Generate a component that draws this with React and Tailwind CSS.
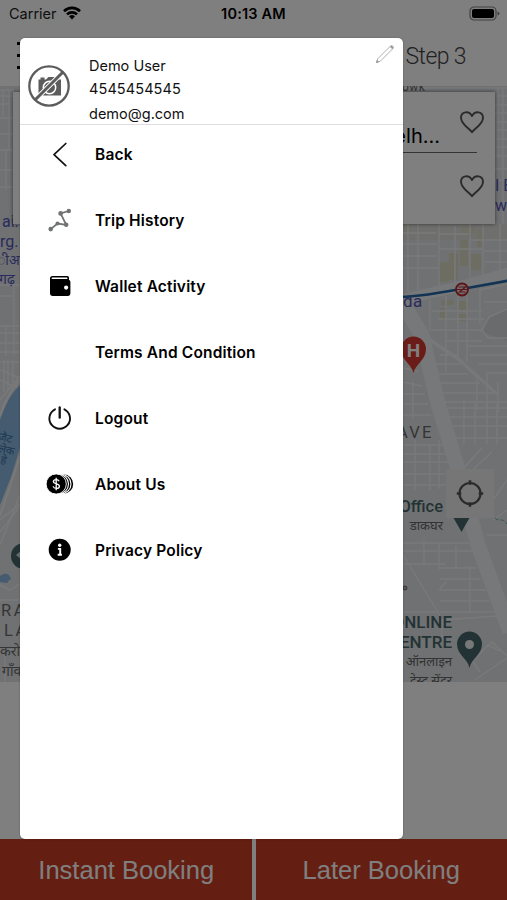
import React from "react";

const BackIcon = () => (
  <svg viewBox="0 0 28 28" className="w-7 h-7" fill="none" stroke="#111" strokeWidth="1.7" strokeLinecap="round" strokeLinejoin="round">
    <path d="M19.8 2.5 8 13.7l11.8 11" />
  </svg>
);

const TripIcon = () => (
  <svg viewBox="0 0 28 28" className="w-7 h-7" fill="#6f7371" stroke="#6f7371">
    <path d="M4.7 22.1 11.6 16.500l8.600 1.300L14.600 6.400l8.200-2.400" fill="none" strokeWidth="1.8" />
    <g stroke="none">
      <circle cx="4.7" cy="22.1" r="2.300" />
      <circle cx="11.500" cy="16.500" r="2" />
      <circle cx="20.2" cy="17.8" r="2.200" />
      <circle cx="14.600" cy="6.400" r="2.300" />
      <circle cx="22.8" cy="4" r="2.200" />
    </g>
  </svg>
);

const WalletIcon = () => (
  <svg viewBox="0 0 28 28" className="w-7 h-7">
    <path d="M6.500 3h14.800a1.800 1.800 0 0 1 1.700 1.800v2h-.2a2.200 2.200 0 0 1 1.600 2.100v11.700a2.300 2.300 0 0 1-2.300 2.300H6.300A2.300 2.300 0 0 1 4 20.600V5.500A2.500 2.500 0 0 1 6.500 3z" fill="#000" />
    <path d="M6.300 5.300h14.500" stroke="#fff" strokeWidth="1.500" strokeLinecap="round" />
    <circle cx="20.1" cy="14.600" r="2.100" fill="#fff" />
  </svg>
);

const PowerIcon = () => (
  <svg viewBox="0 0 28 28" className="w-7 h-7" fill="none" stroke="#111" strokeWidth="1.900" strokeLinecap="round">
    <path d="M9 4.300a10.300 10.300 0 1 0 9.400 0" />
    <path d="M13.700 2.500v10.200" strokeWidth="2.300" />
  </svg>
);

const CoinsIcon = () => (
  <svg viewBox="0 0 28 28" className="w-7 h-7" fill="#000">
    <circle cx="17.500" cy="13" r="9.700" />
    <circle cx="15.300" cy="13" r="9.700" stroke="#fff" strokeWidth="1.100" />
    <circle cx="12.800" cy="13" r="9.700" stroke="#fff" strokeWidth="1.100" />
    <circle cx="10.200" cy="13" r="10.100" stroke="#fff" strokeWidth=".9" />
    <path d="M13.100 10.200c-.5-1.200-1.600-1.600-2.900-1.600-1.700 0-2.800.8-2.800 2 0 3 6 1.500 6 4.600 0 1.300-1.200 2.200-3.100 2.200-1.600 0-2.800-.7-3.200-2M10.200 6.800v12.400" fill="none" stroke="#fff" strokeWidth="1.300" />
  </svg>
);

const InfoIcon = () => (
  <svg viewBox="0 0 28 28" className="w-7 h-7">
    <circle cx="13.700" cy="12.800" r="11" fill="#000" />
    <circle cx="13.700" cy="8.300" r="1.700" fill="#fff" />
    <path d="M11.900 11.900h2.300v5.800m-2.500 0h4.200" fill="none" stroke="#fff" strokeWidth="1.900" />
  </svg>
);

const MENU = [
  { label: "Back", icon: BackIcon },
  { label: "Trip History", icon: TripIcon },
  { label: "Wallet Activity", icon: WalletIcon },
  { label: "Terms And Condition", icon: null },
  { label: "Logout", icon: PowerIcon },
  { label: "About Us", icon: CoinsIcon },
  { label: "Privacy Policy", icon: InfoIcon },
];

const StatusBar = () => (
  <div className="h-7 px-[9px] grid grid-cols-3 items-center text-black text-[14.500px]">
    <div className="flex items-center gap-[6px]">
      <span className="text-[#222]">Carrier</span>
      <svg viewBox="0 0 18 14" className="w-[18px] h-[14px] -mt-[2px]" fill="none" stroke="#000" strokeWidth="2.700">
        <path d="M1 5.200a11.500 11.500 0 0 1 16 0M4 8.400a7.200 7.200 0 0 1 10 0" />
        <path d="m9 13.500 2.900-3a4.100 4.100 0 0 0-5.800 0z" fill="#000" stroke="none" />
      </svg>
    </div>
    <span className="text-center font-semibold tracking-[0.2px]">10:13 AM</span>
    <svg viewBox="0 0 31 15" className="w-[31px] h-[15px] justify-self-end -mr-[2px] -mt-[2px]">
      <rect x="1" y="1" width="26" height="13" rx="4" fill="none" stroke="#848484" strokeWidth="1.200" />
      <rect x="3" y="3" width="22" height="9" rx="2" fill="#000" />
      <path d="M28.500 5.500v4q2-.6 2-2t-2-2z" fill="#848484" />
    </svg>
  </div>
);

const MINOR_ROADS = [
  // east side, above the metro line
  "M408 224v68M418 224v66M439 224v62M455 226v56M470 224v60M483 224v54M500 224v50",
  "M403 233h33M403 244h34M403 256h34M403 268h36M439 234h30M439 249h44M470 240h37M484 251h23M484 262h23",
  // south of the metro line
  "M430 300v30M446 296v76M458 296v60M467 292v70M480 288v36M432 311h50M438 319h46M430 330h52M446 341h36",
  "M507 309l-18 8-7 13 6 8h19M480 290l27-6M484 302h23M467 346h40M470 355h37M479 364h28M488 373h19",
  "M403 350h18M440 355h18M436 364h24M436 374h32M440 383h40M442 393h52M444 402h63M477 374v36M487 372v36M498 382v30",
  "M403 368l15 3M403 382l19 4M403 394h22M403 404h25M403 415h28M413 382v36",
  // around the locate button
  "M443 408h64M448 417h59M450 426h57M455 438h52M464 400v44M475 402v42M487 402v42M497 404v40",
  "M403 445h44M403 454h46M403 462h45M403 474h42M403 485h43M403 543h66M415 440v50M430 445v45M439 440v49",
  "M462 470l20-22M468 474l24-22M493 500l14-20M493 520l14-10M487 535h20",
  // south east
  "M403 551h69M403 564h42M440 568h36M440 579h40M440 590h46M440 601h50M440 612h56M403 555l38 62M439 543v28M424 540v26",
  "M456 545v22M470 566v46M439 590l7-8M403 612h36M442 640v-20l56-4M475 680l32-22M474 660l14-15 12 6M480 672l-8-12 20-18 15 14",
  "M403 88h104M495 96h12M495 105h12M495 113h12M495 122h12M495 130h12M495 139h12M495 147h12M495 156h12M498 88v70M503 88v136M495 169h12M495 180h12",
  // west side
  "M0 90h14M0 96h13M0 104h10M3 90v28M9 90v60M0 118h13M0 134h13M0 150h13M0 170h13M6 150v40M0 187h13",
  "M0 285h20M0 296h14v30H0M14 285v70M0 326h20M0 333h20M6 326v30M0 343h20M0 352h20M13 360v30M0 362h20M0 370l20 8M0 380l18 8",
  "M4 360v32M8 360v30M0 400l20-24M0 520l20-16M0 532l20-26M0 545l20-50M0 585l10 5 10-6M0 600h20M0 650h20M5 655v27",
];

const GREEN_BLOCKS = [
  [461, 226, 14, 8], [460, 240, 8, 26], [449, 253, 9, 27], [471, 254, 10, 16], [477, 229, 5, 18],
  [439, 262, 10, 20], [441, 300, 13, 5], [440, 308, 6, 12], [458, 301, 10, 9], [458, 314, 10, 7], [404, 226, 5, 7],
];

const MapView = () => (
  <svg viewBox="0 86 507 596" className="block w-full h-[596px]" fontFamily="Roboto, 'Noto Sans', 'Noto Sans Devanagari', sans-serif">
    <rect y="86" width="507" height="596" fill="#dfe2e4" />
    {GREEN_BLOCKS.map(([x, y, w, h]) => (
      <rect key={`${x}-${y}`} x={x} y={y} width={w} height={h} fill="#dcdbc4" />
    ))}
    <path d="M403 224h104v16H403z" fill="#e0e0d2" opacity=".5" />
    <path d="M507 308c-15 5-22 14-25 24l25 9z" fill="#d3d6d8" />
    <g fill="none" stroke="#f2f3f5" strokeWidth="1.400">
      {MINOR_ROADS.map((d) => (
        <path key={d} d={d} />
      ))}
    </g>

    {/* Main roads */}
    <g fill="none" stroke="#eff0f2">
      <path d="M400 300 462 286 512 272" strokeWidth="11" />
      <path d="M404 306 422 335 437 400 457 466 478 545 510 632" strokeWidth="15" />
      <path d="M424 336 457 358 497 394" strokeWidth="3.500" />
    </g>
    <path d="M396 297c28 0 38-4 66-8l50-9" fill="none" stroke="#2468a8" strokeWidth="2.600" />

    {/* Water */}
    <path d="M20 385C12 393 6 402 0 420v85l11-28 9-29z" fill="#88b7e0" />
    <path d="M0 576c5-4 10-3 11 4-3-1-2 3-5 3l-6-1z" fill="#88b7e0" />
    <path d="M0 416C5 401 12 388 20 380M0 516l20-60" fill="none" stroke="#f2f3f5" strokeWidth="2" />

    {/* Metro station */}
    <circle cx="462" cy="289.500" r="6" fill="#e6dfe2" stroke="#b82a30" strokeWidth="1.800" />
    <path d="M458.500 287h7l-6 5h6M456 289.500h12" fill="none" stroke="#b82a30" strokeWidth="1.200" />

    {/* Hospital pin */}
    <path d="M413.500 373c-2-9-12.500-13-12.500-24a12.500 12.500 0 0 1 25 0c0 11-10.500 15-12.500 24z" fill="#d93830" />
    <text x="413.500" y="356.500" textAnchor="middle" fontSize="19" fontWeight="700" fill="#fff">H</text>

    {/* Place pins */}
    <path d="M453 517h17l-8.500 15z" fill="#47666a" />
    <path d="M469.500 668c-2-10-12.500-13-12.500-24a12.500 12.500 0 0 1 25 0c0 11-10.500 14-12.500 24z" fill="#47666a" />
    <circle cx="469.500" cy="644.500" r="4.500" fill="#eef0f1" />
    <circle cx="24" cy="556" r="13" fill="#47666a" />
    <path d="m16 555 6-5v10z" fill="#cfdadd" />
    <circle cx="405" cy="588" r="2" fill="#aaa" stroke="#666" />

    <g fill="#5557b8">
      <text x="2" y="227" fontSize="16">ai.</text>
      <text x="0" y="247" fontSize="16">rg.</text>
      <text x="-3" y="265" fontSize="14">ीआ</text>
      <text x="-1" y="284" fontSize="14">गढ़</text>
      <text x="403" y="307" fontSize="17" letterSpacing=".3">da</text>
      <text x="495" y="191" fontSize="16">I E</text>
      <text x="495" y="211" fontSize="16">wh</text>
    </g>
    <g fill="#3d6da2" fontSize="11">
      <text transform="translate(-2 440) rotate(12)">जैट</text>
      <text transform="translate(-2 452) rotate(12)">लेक</text>
      <text transform="translate(0 463) rotate(12)">हे</text>
    </g>
    <g fill="#6b6b6b">
      <text x="402" y="91" fontSize="12" letterSpacing=".5">owk</text>
      <text x="397" y="438" fontSize="16.500" letterSpacing="2.200">AVE</text>
      <text x="1" y="616" fontSize="16.500" letterSpacing="2.500">RA</text>
      <text x="4" y="636" fontSize="16.500" letterSpacing="2.500">LA</text>
      <text x="0" y="656" fontSize="14">करो</text>
      <text x="2" y="676" fontSize="14">गाँव</text>
    </g>
    <g fill="#47666a" textAnchor="end">
      <text x="443" y="512" fontSize="16.500" fontWeight="500">Office</text>
      <text x="443" y="530" fontSize="13" fill="#666">डाकघर</text>
      <text x="452" y="628" fontSize="17" fontWeight="500">ONLINE</text>
      <text x="452" y="648" fontSize="17" fontWeight="500">CENTRE</text>
      <text x="452" y="666" fontSize="13" fill="#666">ऑनलाइन</text>
      <text x="452" y="685" fontSize="13" fill="#666">टेस्ट सेंटर</text>
    </g>
    <path d="M495 518c4 4 7-1 12 6" fill="none" stroke="#6bb0a9" strokeDasharray="4 2" />
  </svg>
);

const Heart = () => (
  <svg viewBox="0 0 26 24" className="w-[26px] h-6" fill="none" stroke="#555" strokeWidth="1.900" strokeLinejoin="round">
    <path d="M13 22.300C10 18 2 14.500 2 7.800 2 1.300 10 .3 13 6c3-5.700 11-4.700 11 1.800 0 6.700-8 10.200-11 14.500z" />
  </svg>
);

const AddressCard = () => (
  <div className="absolute top-[6px] left-[13px] right-[12.500px] h-[132px] bg-white shadow-[0_0_4px_rgba(0,0,0,0.55)] pl-4 pr-[10px] pt-[18px]">
    <div className="flex justify-between">
      <div className="w-[411px] h-9 text-right text-xl text-black leading-[53px]">Delh…</div>
      <Heart />
    </div>
    <div className="border-t-[1.500px] border-[#666] mt-[6px] mr-2" />
    <div className="flex justify-end mt-[21px]">
      <Heart />
    </div>
  </div>
);

const LocateButton = () => (
  <div className="absolute top-[383px] right-[13px] w-12 h-[49px] bg-[#ededed] flex items-center justify-center">
    <svg viewBox="0 0 28 28" className="w-7 h-7" fill="none" stroke="#555" strokeWidth="2.200">
      <circle cx="14" cy="13.500" r="10.500" />
      <path d="M14 .3v4.500M14 22.200v4.500M.8 13.500h4.500M22.700 13.500h4.500" strokeWidth="2.600" />
    </svg>
  </div>
);

const BookingPage = () => (
  <div className="h-[900px] flex flex-col bg-white">
    <StatusBar />
    <div className="h-[58px] flex items-center justify-between pl-[17px] pr-[41px]">
      <div className="flex flex-col gap-[9px] -mt-[3px]">
        <span className="w-7 h-[3px] bg-black" />
        <span className="w-7 h-[3px] bg-black" />
        <span className="w-7 h-[3px] bg-black" />
      </div>
      <span className="font-[Roboto] font-light text-[23px] tracking-[-0.6px] text-[#444]">Step 3</span>
    </div>
    <div className="relative">
      <MapView />
      <AddressCard />
      <LocateButton />
    </div>
    <div className="mt-auto h-[61px] grid grid-cols-2 gap-1 text-white text-[25.500px] font-['Liberation_Sans']">
      <button className="bg-[#c83c24] pt-[2px] pl-[1px]">Instant Booking</button>
      <button className="bg-[#c83c24] pt-[2px]">Later Booking</button>
    </div>
  </div>
);

const NoPhoto = () => (
  <svg viewBox="0 0 42 42" className="w-[42px] h-[42px]">
    <path d="M10.500 14.500h2v-2h4v2h1.500l2.500-2.500h6l2.500 2.500h4v16h-22.500z" fill="#5c5c5c" />
    <circle cx="21.500" cy="22.500" r="6.200" fill="#5c5c5c" stroke="#fff" strokeWidth="1.500" />
    <path d="M7 35 35 7" stroke="#fff" strokeWidth="4.800" />
    <path d="M7 35 35 7" stroke="#5c5c5c" strokeWidth="3" />
    <circle cx="21" cy="21" r="19.700" fill="none" stroke="#5c5c5c" strokeWidth="2.300" />
  </svg>
);

const Pencil = () => (
  <svg viewBox="0 0 20 20" className="w-5 h-5" fill="none" stroke="#9a9a9a" strokeWidth=".8" strokeLinejoin="round">
    <path d="M1.500 18.500 2.700 14.800 15.300 2.200a1.700 1.700 0 0 1 2.500 2.500L5.200 17.300z" />
    <path d="m15.300 2.700 2 2 .6-1.500-1.100-1.100zM1.500 18.500l.5-2 1.500 1.500z" fill="#888" />
  </svg>
);

const Drawer = () => (
  <aside className="absolute top-[38px] left-[19.500px] w-[383.500px] h-[800.500px] bg-white rounded-[5px] shadow-[0_0_2px_rgba(0,0,0,0.3)]">
    <div className="h-[87px] flex items-start border-b border-[#dedede] pl-2 pr-2">
      <div className="mt-[27px]">
        <NoPhoto />
      </div>
      <div className="ml-[19.500px] mt-4 flex-1 text-[14.500px] leading-6 text-[#111]">
        <p>Demo User</p>
        <p className="-mt-px tracking-[0.1px]">4545454545</p>
        <p className="mt-px">demo@g.com</p>
      </div>
      <div className="mt-[6px]">
        <Pencil />
      </div>
    </div>
    <nav className="flex flex-col gap-[42px] pt-[18px] pl-[26px]">
      {MENU.map(({ label, icon: Icon }) => (
        <div key={label} className="h-6 flex items-center gap-[21.500px]">
          <div className="w-7 h-7">{Icon && <Icon />}</div>
          <span className="text-[15.500px] font-semibold tracking-[0.16px] text-black">{label}</span>
        </div>
      ))}
    </nav>
  </aside>
);

const App = () => (
  <div className="relative w-[507px] h-[900px] overflow-hidden font-[Inter]">
    <BookingPage />
    <div className="absolute inset-0 bg-black/50" />
    <Drawer />
  </div>
);

export default App;
